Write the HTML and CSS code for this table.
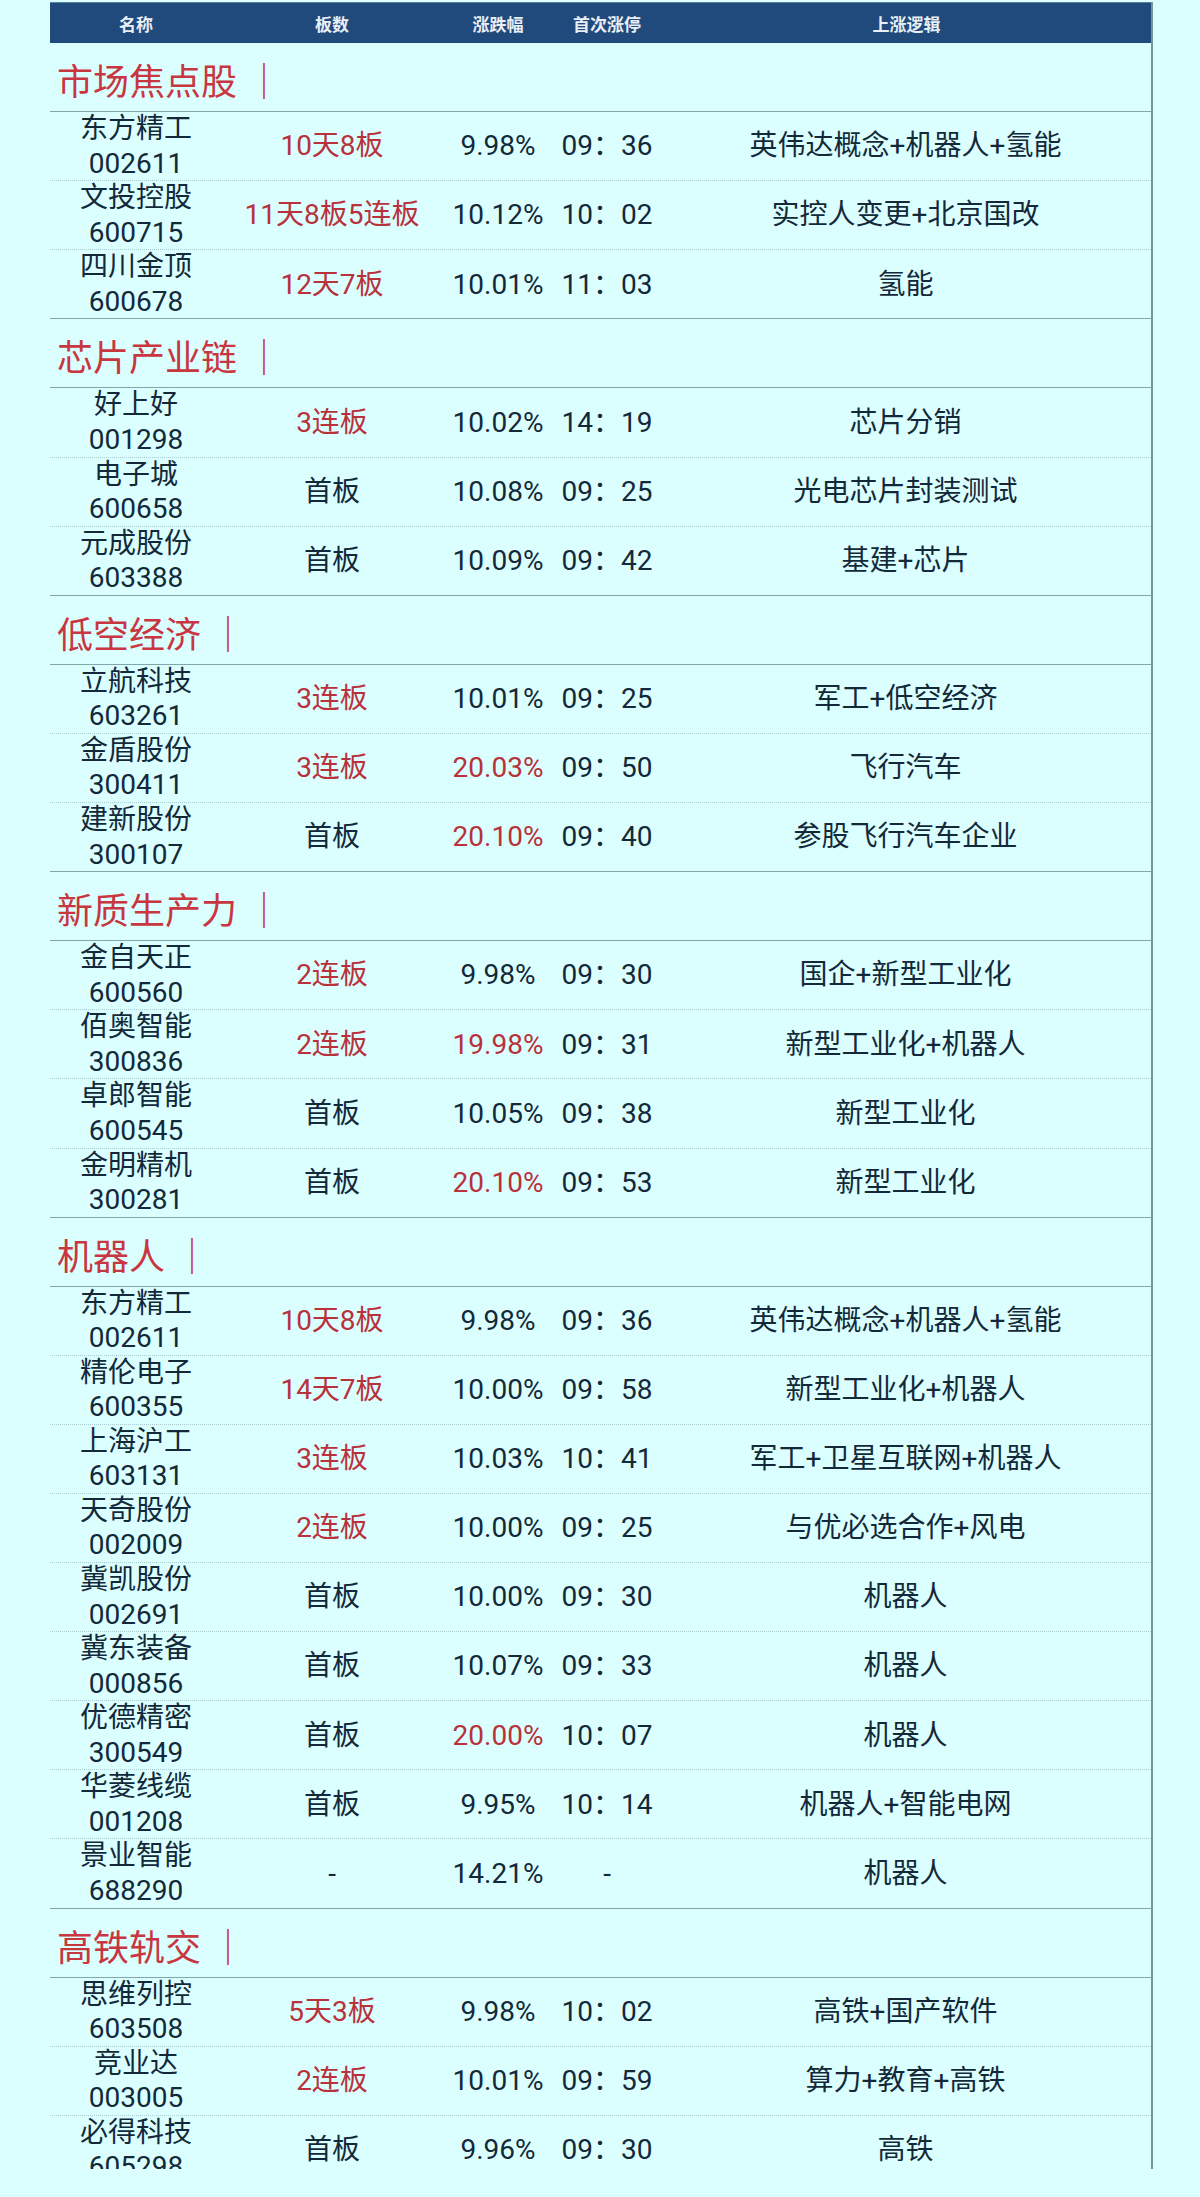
FILE: index.html
```html
<!DOCTYPE html>
<html lang="zh-CN">
<head>
<meta charset="utf-8">
<title>涨停板</title>
<link rel="stylesheet" href="styles.css">
</head>
<body>
<div class="wrap">
<div class="table">
  <div class="thead">
    <div>名称</div><div>板数</div><div>涨跌幅</div><div>首次涨停</div><div>上涨逻辑</div>
  </div>

  <section class="sec">
    <div class="title">市场焦点股 ｜</div>
    <div class="row"><div class="name">东方精工<br>002611</div><div class="red">10天8板</div><div>9.98%</div><div>09：36</div><div>英伟达概念+机器人+氢能</div></div>
    <div class="row"><div class="name">文投控股<br>600715</div><div class="red">11天8板5连板</div><div>10.12%</div><div>10：02</div><div>实控人变更+北京国改</div></div>
    <div class="row"><div class="name">四川金顶<br>600678</div><div class="red">12天7板</div><div>10.01%</div><div>11：03</div><div>氢能</div></div>
  </section>

  <section class="sec">
    <div class="title">芯片产业链 ｜</div>
    <div class="row"><div class="name">好上好<br>001298</div><div class="red">3连板</div><div>10.02%</div><div>14：19</div><div>芯片分销</div></div>
    <div class="row"><div class="name">电子城<br>600658</div><div>首板</div><div>10.08%</div><div>09：25</div><div>光电芯片封装测试</div></div>
    <div class="row"><div class="name">元成股份<br>603388</div><div>首板</div><div>10.09%</div><div>09：42</div><div>基建+芯片</div></div>
  </section>

  <section class="sec">
    <div class="title">低空经济 ｜</div>
    <div class="row"><div class="name">立航科技<br>603261</div><div class="red">3连板</div><div>10.01%</div><div>09：25</div><div>军工+低空经济</div></div>
    <div class="row"><div class="name">金盾股份<br>300411</div><div class="red">3连板</div><div class="red">20.03%</div><div>09：50</div><div>飞行汽车</div></div>
    <div class="row"><div class="name">建新股份<br>300107</div><div>首板</div><div class="red">20.10%</div><div>09：40</div><div>参股飞行汽车企业</div></div>
  </section>

  <section class="sec">
    <div class="title">新质生产力 ｜</div>
    <div class="row"><div class="name">金自天正<br>600560</div><div class="red">2连板</div><div>9.98%</div><div>09：30</div><div>国企+新型工业化</div></div>
    <div class="row"><div class="name">佰奥智能<br>300836</div><div class="red">2连板</div><div class="red">19.98%</div><div>09：31</div><div>新型工业化+机器人</div></div>
    <div class="row"><div class="name">卓郎智能<br>600545</div><div>首板</div><div>10.05%</div><div>09：38</div><div>新型工业化</div></div>
    <div class="row"><div class="name">金明精机<br>300281</div><div>首板</div><div class="red">20.10%</div><div>09：53</div><div>新型工业化</div></div>
  </section>

  <section class="sec">
    <div class="title">机器人 ｜</div>
    <div class="row"><div class="name">东方精工<br>002611</div><div class="red">10天8板</div><div>9.98%</div><div>09：36</div><div>英伟达概念+机器人+氢能</div></div>
    <div class="row"><div class="name">精伦电子<br>600355</div><div class="red">14天7板</div><div>10.00%</div><div>09：58</div><div>新型工业化+机器人</div></div>
    <div class="row"><div class="name">上海沪工<br>603131</div><div class="red">3连板</div><div>10.03%</div><div>10：41</div><div>军工+卫星互联网+机器人</div></div>
    <div class="row"><div class="name">天奇股份<br>002009</div><div class="red">2连板</div><div>10.00%</div><div>09：25</div><div>与优必选合作+风电</div></div>
    <div class="row"><div class="name">冀凯股份<br>002691</div><div>首板</div><div>10.00%</div><div>09：30</div><div>机器人</div></div>
    <div class="row"><div class="name">冀东装备<br>000856</div><div>首板</div><div>10.07%</div><div>09：33</div><div>机器人</div></div>
    <div class="row"><div class="name">优德精密<br>300549</div><div>首板</div><div class="red">20.00%</div><div>10：07</div><div>机器人</div></div>
    <div class="row"><div class="name">华菱线缆<br>001208</div><div>首板</div><div>9.95%</div><div>10：14</div><div>机器人+智能电网</div></div>
    <div class="row"><div class="name">景业智能<br>688290</div><div>-</div><div>14.21%</div><div>-</div><div>机器人</div></div>
  </section>

  <section class="sec">
    <div class="title">高铁轨交 ｜</div>
    <div class="row"><div class="name">思维列控<br>603508</div><div class="red">5天3板</div><div>9.98%</div><div>10：02</div><div>高铁+国产软件</div></div>
    <div class="row"><div class="name">竞业达<br>003005</div><div class="red">2连板</div><div>10.01%</div><div>09：59</div><div>算力+教育+高铁</div></div>
    <div class="row"><div class="name">必得科技<br>605298</div><div>首板</div><div>9.96%</div><div>09：30</div><div>高铁</div></div>
  </section>
</div>
</div>
</body>
</html>
```

FILE: styles.css
```css
html, body {
  margin: 0;
  padding: 0;
  background: #dbffff;
}

body {
  font-family: Roboto, "Noto Sans CJK SC", sans-serif;
  color: #13293a;
}

.wrap {
  padding: 2px 0 0 50px;
}

.table {
  width: 1103px;
  height: 2167px;
  overflow: hidden;
  border-right: 2px solid #6e9a9d;
  box-sizing: border-box;
}

.thead {
  display: grid;
  grid-template-columns: 172px 220px 112px 106px 1fr;
  height: 41px;
  background: #214a7c;
  color: #e9eff6;
  font-size: 17px;
  font-weight: 700;
  align-items: center;
  text-align: center;
  border-top: 1px solid #5d7f9e;
  box-sizing: border-box;
  margin-right: -2px;
}

.title {
  height: 69.1px;
  box-sizing: border-box;
  border-bottom: 1.5px solid #80a8ab;
  display: flex;
  align-items: center;
  padding: 4px 0 0 7px;
  font-size: 36px;
  font-weight: 400;
  color: #c8363f;
  letter-spacing: 0;
}

.row {
  display: grid;
  grid-template-columns: 172px 220px 112px 106px 1fr;
  height: 69.1px;
  box-sizing: border-box;
  border-bottom: 1px dotted #a9cdd2;
  align-items: center;
  text-align: center;
  font-size: 28px;
  line-height: 34.5px;
}

.row:last-child {
  border-bottom: 1.5px solid #80a8ab;
}

.name {
  line-height: 34.5px;
}

.red {
  color: #b8313b;
}
```
